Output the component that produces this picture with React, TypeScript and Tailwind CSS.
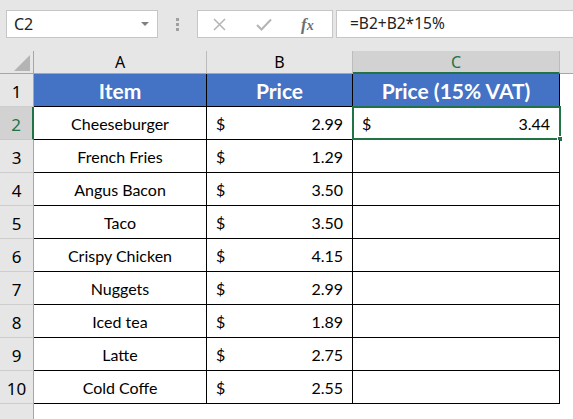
import React from 'react';

const rows = [
  { item: 'Cheeseburger', price: '2.99', vat: '3.44' },
  { item: 'French Fries', price: '1.29' },
  { item: 'Angus Bacon', price: '3.50' },
  { item: 'Taco', price: '3.50' },
  { item: 'Crispy Chicken', price: '4.15' },
  { item: 'Nuggets', price: '2.99' },
  { item: 'Iced tea', price: '1.89' },
  { item: 'Latte', price: '2.75' },
  { item: 'Cold Coffe', price: '2.55' },
];

const ui = { fontFamily: '"Noto Sans", "Open Sans", sans-serif' };
const cell = { fontFamily: 'Lato, "Liberation Sans", sans-serif' };

const RowHead: React.FC<{ n?: number; active?: boolean }> = ({ n, active }) => (
  <div
    style={ui}
    className={
      active
        ? 'h-[33px] bg-[#d2d2d2] border-b border-[#c8c8c8] border-r-2 border-r-[#217346] flex items-center justify-center text-[17px] text-[#217346] pt-[4px]'
        : 'h-[33px] bg-[#e6e6e6] border-b border-[#cdcdcd] border-r border-r-[#a6a6a6] flex items-center justify-center text-[17px] text-black pt-[4px]'
    }
  >
    {n}
  </div>
);

const App: React.FC = () => {
  return (
    <div className="w-[573px] h-[419px] bg-[#e6e6e6] overflow-hidden">
      {/* Formula bar */}
      <div className="h-[51px] flex items-start pt-[10px]">
        <div className="ml-[6px] w-[152px] h-[28px] bg-white border border-[#c6c6c6] flex items-center justify-between pl-[7px] pr-[8px]">
          <span style={ui} className="text-[16px] text-[#222]">C2</span>
          <svg width="8" height="5" viewBox="0 0 8 5">
            <path d="M0 0 L8 0 L4 4 Z" fill="#808080" />
          </svg>
        </div>
        <div className="w-[39px] h-[28px] flex flex-col items-center justify-center gap-[2px]">
          <div className="w-[3px] h-[3px] bg-[#a0a0a0]" />
          <div className="w-[3px] h-[3px] bg-[#a0a0a0]" />
          <div className="w-[3px] h-[3px] bg-[#a0a0a0]" />
        </div>
        <div className="w-[136px] h-[28px] bg-white border border-[#c6c6c6] flex items-center">
          <svg className="ml-[15px]" width="13" height="13" viewBox="0 0 13 13">
            <path d="M1 1 L12 12 M12 1 L1 12" stroke="#b4b4b4" strokeWidth="1.5" />
          </svg>
          <svg className="ml-[30px]" width="16" height="13" viewBox="0 0 16 13">
            <path d="M1 7 L5.5 11.5 L15 1.5" stroke="#b4b4b4" strokeWidth="2" fill="none" />
          </svg>
          <span
            className="ml-[29px] text-[17px] italic font-bold text-[#6e6e6e] leading-none"
            style={{ fontFamily: '"Liberation Serif", serif' }}
          >
            f<span className="text-[14px]">x</span>
          </span>
        </div>
        <div className="ml-[3px] flex-1 h-[28px] bg-white border border-[#c6c6c6] border-r-0 flex items-center pl-[13px]">
          <span style={ui} className="text-[15.5px] text-[#222]">=B2+B2*15%</span>
        </div>
      </div>

      {/* Sheet */}
      <div className="grid grid-cols-[34px_173px_146px_207px_13px]">
        {/* column headers */}
        <div className="h-[23px] bg-[#e6e6e6] border-r border-b border-[#a6a6a6] flex items-end justify-end pr-[3px] pb-[2px]">
          <svg width="16" height="16" viewBox="0 0 16 16">
            <path d="M16 0 L16 16 L0 16 Z" fill="#b4b4b4" />
          </svg>
        </div>
        <div style={ui} className="h-[23px] bg-[#e6e6e6] border-r border-[#bcbcbc] border-b border-b-[#a6a6a6] flex items-center justify-center text-[16px] text-black">A</div>
        <div style={ui} className="h-[23px] bg-[#e6e6e6] border-r border-[#bcbcbc] border-b border-b-[#a6a6a6] flex items-center justify-center text-[16px] text-black">B</div>
        <div style={ui} className="h-[23px] bg-[#d2d2d2] border-r border-[#bcbcbc] border-b-2 border-b-[#217346] flex items-center justify-center text-[16px] text-[#217346]">C</div>
        <div className="h-[23px] bg-[#e6e6e6] border-b border-[#a6a6a6]" />

        {/* header row */}
        <RowHead n={1} />
        <div style={cell} className="h-[33px] bg-[#4472c4] border-r border-b border-black flex items-center justify-center text-[21px] font-bold text-white pt-[2px]">Item</div>
        <div style={cell} className="h-[33px] bg-[#4472c4] border-r border-b border-black flex items-center justify-center text-[21px] font-bold text-white pt-[2px]">Price</div>
        <div style={cell} className="h-[33px] bg-[#4472c4] border-r border-b border-black flex items-center justify-center text-[21px] font-bold text-white pt-[2px]">Price (15% VAT)</div>
        <div className="h-[33px] bg-white" />

        {rows.map((r, i) => (
          <React.Fragment key={r.item}>
            <RowHead n={i + 2} active={i === 0} />
            <div style={cell} className="h-[33px] bg-white border-r border-b border-black flex items-center justify-center text-[16px] text-black pt-[2px]">{r.item}</div>
            <div style={cell} className="h-[33px] bg-white border-r border-b border-black flex items-center justify-between px-[9px] text-[16px] text-black pt-[2px]">
              <span>$</span>
              <span>{r.price}</span>
            </div>
            <div style={cell} className="relative h-[33px] bg-white border-r border-b border-black flex items-center justify-between px-[9px] text-[16px] text-black pt-[2px]">
              {r.vat && (
                <>
                  <span>$</span>
                  <span>{r.vat}</span>
                  <div className="absolute left-[-1px] top-[-1px] right-[-2px] bottom-[-1px] border-2 border-[#217346]" />
                  <div className="absolute right-[-4px] bottom-[-3px] w-[6px] h-[6px] bg-[#217346] border border-white" />
                </>
              )}
            </div>
            <div className="h-[33px] bg-white" />
          </React.Fragment>
        ))}

        <RowHead />
        <div className="h-[33px] bg-white" />
        <div className="h-[33px] bg-white" />
        <div className="h-[33px] bg-white" />
        <div className="h-[33px] bg-white" />
      </div>
    </div>
  );
};

export default App;
